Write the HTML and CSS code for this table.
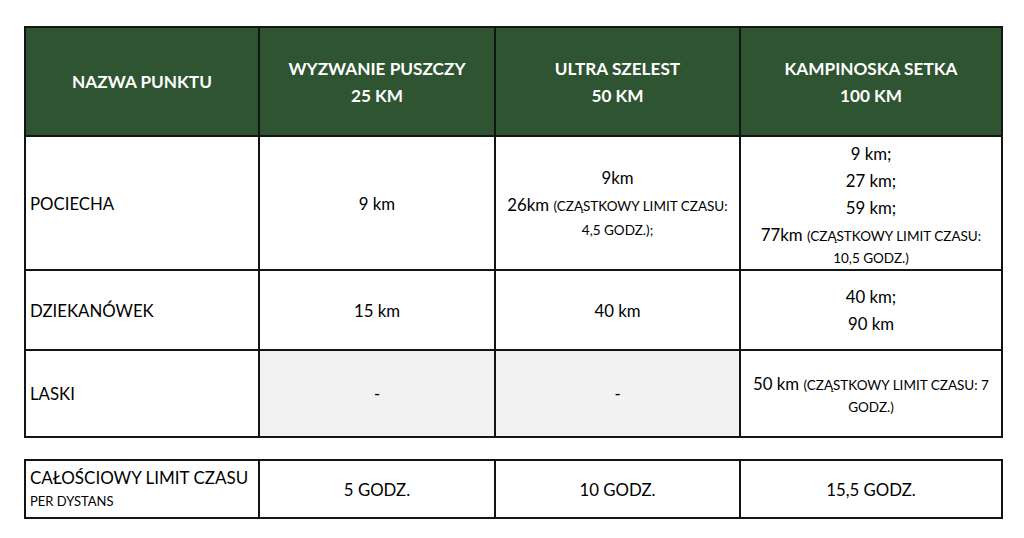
FILE: index.html
```html
<!DOCTYPE html>
<html lang="pl">
<head>
<meta charset="utf-8">
<link rel="stylesheet" href="styles.css">
</head>
<body>
<div class="page">
<table class="grid main">
  <colgroup>
    <col class="c1"><col class="c2"><col class="c3"><col class="c4">
  </colgroup>
  <thead>
    <tr class="head">
      <th>NAZWA PUNKTU</th>
      <th>WYZWANIE PUSZCZY<br>25 KM</th>
      <th>ULTRA SZELEST<br>50 KM</th>
      <th>KAMPINOSKA SETKA<br>100 KM</th>
    </tr>
  </thead>
  <tbody>
    <tr class="r1">
      <td class="name">POCIECHA</td>
      <td>9 km</td>
      <td>
        <div class="ln">9km</div>
        <div class="ln">26km <span class="sm">(CZĄSTKOWY LIMIT CZASU:</span></div>
        <div class="ln sm2">4,5 GODZ.);</div>
      </td>
      <td class="long">
        <div class="ln">9 km;</div>
        <div class="ln">27 km;</div>
        <div class="ln">59 km;</div>
        <div class="ln">77km <span class="sm">(CZĄSTKOWY LIMIT CZASU:</span></div>
        <div class="ln sm2 tight">10,5 GODZ.)</div>
      </td>
    </tr>
    <tr class="r2">
      <td class="name">DZIEKANÓWEK</td>
      <td>15 km</td>
      <td>40 km</td>
      <td>
        <div class="ln">40 km;</div>
        <div class="ln">90 km</div>
      </td>
    </tr>
    <tr class="r3">
      <td class="name">LASKI</td>
      <td class="empty">-</td>
      <td class="empty">-</td>
      <td>
        <div class="ln">50 km <span class="sm">(CZĄSTKOWY LIMIT CZASU: 7</span></div>
        <div class="ln sm2 tight">GODZ.)</div>
      </td>
    </tr>
  </tbody>
</table>

<table class="grid total">
  <colgroup>
    <col class="c1"><col class="c2"><col class="c3"><col class="c4">
  </colgroup>
  <tbody>
    <tr class="rt">
      <td class="name">
        <div class="tl">CAŁOŚCIOWY LIMIT CZASU</div>
        <div class="ts">PER DYSTANS</div>
      </td>
      <td>5 GODZ.</td>
      <td>10 GODZ.</td>
      <td>15,5 GODZ.</td>
    </tr>
  </tbody>
</table>
</div>
</body>
</html>
```

FILE: styles.css
```css
html, body {
  margin: 0;
  padding: 0;
  background: #ffffff;
}

.page {
  padding: 26px 0 0 24px;
  font-family: Lato, "Liberation Sans", sans-serif;
  color: #000000;
}

.grid {
  border-collapse: collapse;
  table-layout: fixed;
  width: 979px;
}

.grid td, .grid th {
  border: 2px solid #141414;
  padding: 0;
  text-align: center;
  vertical-align: middle;
  font-size: 16.8px;
}

.c1 { width: 234px; }
.c2 { width: 236px; }
.c3 { width: 245px; }
.c4 { width: 262px; }

.head th {
  background: #2e5431;
  color: #ffffff;
  font-weight: bold;
  font-size: 17.2px;
  line-height: 27px;
  height: 107px;
}

.r1 td { height: 132px; }
.r2 td { height: 78px; }
.r3 td { height: 85px; }

.r1 td.long {
  height: 130px;
  padding-top: 2px;
}

.name {
  text-align: left !important;
  padding-left: 4px !important;
}

.ln {
  line-height: 27px;
}

.sm {
  font-size: 13.5px;
  line-height: 1;
}

.sm2 {
  font-size: 13.5px;
  line-height: 24px;
}

.tight {
  line-height: 20px;
}

.empty {
  background: #f2f2f2;
}

.total {
  margin-top: 21px;
}

.rt td { height: 56px; }

.rt td.name {
  padding-top: 2px;
  height: 54px;
}

.tl {
  font-size: 17px;
  line-height: 22px;
}

.ts {
  font-size: 13px;
  line-height: 24px;
}
```
